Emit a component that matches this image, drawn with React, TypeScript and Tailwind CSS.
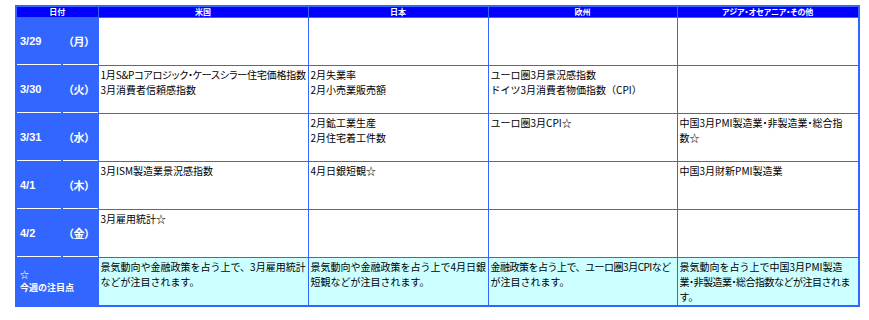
import React from "react";

type Row = {
  date: string;
  wd: string;
  us: string[];
  jp: string[];
  eu: string[];
  as: string[];
};

const rows: Row[] = [
  { date: "3/29", wd: "（月）", us: [], jp: [], eu: [], as: [] },
  {
    date: "3/30",
    wd: "（火）",
    us: ["1月S&Pコアロジック・ケースシラー住宅価格指数", "3月消費者信頼感指数"],
    jp: ["2月失業率", "2月小売業販売額"],
    eu: ["ユーロ圏3月景況感指数", "ドイツ3月消費者物価指数（CPI）"],
    as: [],
  },
  {
    date: "3/31",
    wd: "（水）",
    us: [],
    jp: ["2月鉱工業生産", "2月住宅着工件数"],
    eu: ["ユーロ圏3月CPI☆"],
    as: ["中国3月PMI製造業・非製造業・総合指", "数☆"],
  },
  {
    date: "4/1",
    wd: "（木）",
    us: ["3月ISM製造業景況感指数"],
    jp: ["4月日銀短観☆"],
    eu: [],
    as: ["中国3月財新PMI製造業"],
  },
  { date: "4/2", wd: "（金）", us: ["3月雇用統計☆"], jp: [], eu: [], as: [] },
];

const summary: string[][] = [
  ["景気動向や金融政策を占う上で、3月雇用統計", "などが注目されます。"],
  ["景気動向や金融政策を占う上で4月日銀", "短観などが注目されます。"],
  ["金融政策を占う上で、ユーロ圏3月CPIなど", "が注目されます。"],
  ["景気動向を占う上で中国3月PMI製造", "業・非製造業・総合指数などが注目されま", "す。"],
];

const tight = new Set([
  "金融政策を占う上で、ユーロ圏3月CPIなど",
  "業・非製造業・総合指数などが注目されま",
]);

function Txt({ s }: { s: string }) {
  const parts = s.split("・");
  return (
    <>
      {parts.map((p, i) => (
        <React.Fragment key={i}>
          {i > 0 && <span className="[font-feature-settings:'palt']">・</span>}
          {p}
        </React.Fragment>
      ))}
    </>
  );
}

function lineClass(l: string) {
  if (l.startsWith("1月S")) return "whitespace-nowrap [font-feature-settings:'palt'] tracking-[-0.2px]";
  if (tight.has(l)) return "whitespace-nowrap tracking-[-0.5px]";
  return "whitespace-nowrap";
}

function Cell({ lines, cyan }: { lines: string[]; cyan?: boolean }) {
  return (
    <td
      className={`border border-[#3366ff] align-top pl-[2px] pr-0 pt-[1px] text-[10px] leading-[15px] text-black overflow-hidden ${
        cyan ? "bg-[#ccffff]" : "bg-white"
      }`}
    >
      {lines.map((l, i) => (
        <div key={i} className={lineClass(l)}>
          <Txt s={l} />
        </div>
      ))}
    </td>
  );
}

export default function App() {
  return (
    <div className="bg-white w-[869px] h-[320px] pt-[5px] pl-[15px] [font-family:'Noto_Sans_CJK_JP','Noto_Sans',sans-serif]">
      <table className="border-collapse table-fixed w-[843px] border-2 border-[#3366ff]">
        <colgroup>
          <col className="w-[82px]" />
          <col className="w-[210px]" />
          <col className="w-[180px]" />
          <col className="w-[189px]" />
          <col className="w-[182px]" />
        </colgroup>
        <thead>
          <tr className="h-[11px]">
            {["日付", "米国", "日本", "欧州", "アジア・オセアニア・その他"].map((h) => (
              <th
                key={h}
                className="bg-[#0000ff] border border-[#3366ff] text-white font-bold text-[8px] leading-[10px] p-0 text-center [font-feature-settings:'palt']"
              >
                {h}
              </th>
            ))}
          </tr>
        </thead>
        <tbody>
          {rows.map((r) => (
            <tr key={r.date} className="h-[48px]">
              <td className="bg-[#3366ff] p-0 border border-[#3366ff] h-[48px]">
                <div className="flex h-[47px] gap-[2px]">
                  <div className="w-[44px] border-b border-white flex items-center pl-[3px] text-white font-bold text-[11px] [font-family:'Liberation_Sans',sans-serif]">
                    {r.date}
                  </div>
                  <div className="flex-1 border-b border-white flex items-center pl-[5px] text-white font-bold text-[11px] [font-feature-settings:'palt']">
                    {r.wd}
                  </div>
                </div>
              </td>
              <Cell lines={r.us} />
              <Cell lines={r.jp} />
              <Cell lines={r.eu} />
              <Cell lines={r.as} />
            </tr>
          ))}
          <tr className="h-[48px]">
            <td className="bg-[#3366ff] p-0 border border-[#3366ff] align-middle">
              <div className="pl-[3px] text-white font-bold text-[9px] leading-[13px]">
                <div>☆</div>
                <div>今週の注目点</div>
              </div>
            </td>
            {summary.map((s, i) => (
              <Cell key={i} lines={s} cyan />
            ))}
          </tr>
        </tbody>
      </table>
    </div>
  );
}
